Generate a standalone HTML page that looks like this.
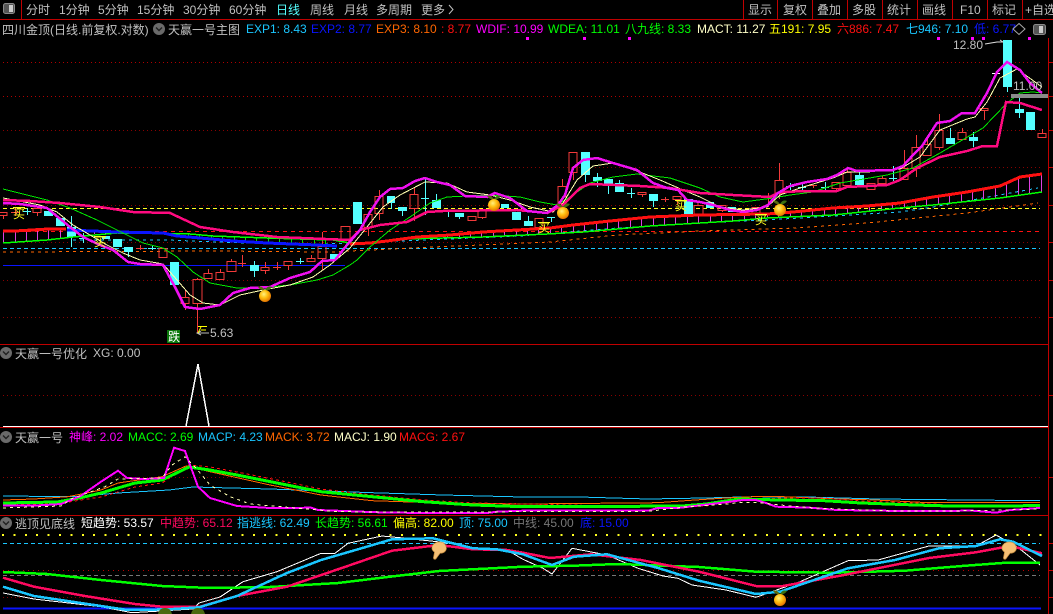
<!DOCTYPE html>
<html><head><meta charset="utf-8"><title>四川金顶</title>
<style>
html,body{margin:0;padding:0;background:#000;width:1053px;height:614px;overflow:hidden}
svg{display:block;position:absolute;left:0;top:0}
text{font-family:"Liberation Sans","WenQuanYi Zen Hei","Noto Sans CJK SC",sans-serif;font-size:12px;white-space:pre}
.l{fill:none;shape-rendering:crispEdges}
.g{fill:#c0c0c0}
</style></head><body>
<svg width="1053" height="614" viewBox="0 0 1053 614" xmlns="http://www.w3.org/2000/svg">
<defs>
<radialGradient id="ap" cx="40%" cy="35%" r="70%"><stop offset="0" stop-color="#fff080"/><stop offset=".45" stop-color="#ffc010"/><stop offset="1" stop-color="#e06a00"/></radialGradient>
<symbol id="apple" viewBox="0 0 16 20" width="16" height="20" overflow="visible">
<path d="M8 6C5 2 3 2 1 3C3 6 6 7 8 6Z" fill="#5a6a10"/><path d="M8 6C10 2 13 2 15 3C13 6 10 7 8 6Z" fill="#3c7010"/>
<circle cx="8" cy="12" r="6" fill="url(#ap)"/></symbol>
<symbol id="hand" viewBox="0 0 16 18" width="16" height="18" overflow="visible">
<path d="M3 3C6 0 12 0 14 4C16 8 13 11 9 11L6 15C5 17 3 17 3 15L4 10C1 8 1 5 3 3Z" fill="#f6c074" stroke="#c48a3c" stroke-width=".6"/></symbol>
<symbol id="dn" viewBox="0 0 12 12" width="12" height="12"><circle cx="6" cy="6" r="6" fill="#6a6a6a"/><path d="M3 4.5L6 7.5L9 4.5" fill="none" stroke="#202020" stroke-width="1.4"/></symbol>
</defs>

<!-- separators -->
<g class="l" stroke="#c00000">
<path d="M0 19.5H1053M0 344.5H1048M0 427.5H1048M0 515.5H1048"/>
<path d="M21.5 0V19M743.5 0V19M777.5 0V19M812.5 0V19M847.5 0V19M882.5 0V19M917.5 0V19M952.5 0V19M987.5 0V19M1022.5 0V19"/>
<path d="M1048.5 38V614"/>
<path d="M1048 62.5h5M1048 96.5h5M1048 130.5h5M1048 167.5h5M1048 205.5h5M1048 242.5h5M1048 280.5h5M1048 317.5h5M1048 395.5h5M1048 477.5h5M1048 543.5h5M1048 570.5h5M1048 597.5h5"/>
</g>

<!-- toolbar -->
<rect x="3.5" y="3.5" width="11" height="10" rx="2" fill="#555" stroke="#8a8a8a"/><rect x="9" y="5" width="4" height="7" fill="#ccc"/>
<g class="g">
<text x="26" y="14">分时</text><text x="59" y="14">1分钟</text><text x="98" y="14">5分钟</text><text x="137" y="14">15分钟</text><text x="183" y="14">30分钟</text><text x="229" y="14">60分钟</text>
<text x="276" y="14" style="fill:#55ffff">日线</text><text x="310" y="14">周线</text><text x="344" y="14">月线</text><text x="376" y="14">多周期</text><text x="421" y="14">更多</text>
<text x="748" y="14">显示</text><text x="783" y="14">复权</text><text x="817" y="14">叠加</text><text x="852" y="14">多股</text><text x="887" y="14">统计</text><text x="922" y="14">画线</text><text x="960" y="14">F10</text><text x="992" y="14">标记</text><text x="1025" y="14">+自选</text>
</g>
<path d="M449 5L453 9.5L449 14" fill="none" stroke="#c0c0c0"/>

<!-- info row -->
<text x="2" y="34" class="g">四川金顶(日线.前复权.对数)</text>
<use href="#dn" x="153" y="23"/>
<text x="168" y="34" class="g">天赢一号主图</text>
<text x="246" y="33" fill="#1ac6ff">EXP1: 8.43</text>
<text x="311" y="33" fill="#0a14ff">EXP2: 8.77</text>
<text x="376" y="33" fill="#ff6600">EXP3: 8.10</text>
<text x="441" y="33" fill="#ff1010">: 8.77</text>
<text x="476" y="33" fill="#ff00ff">WDIF: 10.99</text>
<text x="548" y="33" fill="#00ff00">WDEA: 11.01</text>
<text x="625" y="33" fill="#00ff00">八九线: 8.33</text>
<text x="697" y="33" fill="#ffffc8">MACT: 11.27</text>
<text x="769" y="33" fill="#ffff00">五191: 7.95</text>
<text x="837" y="33" fill="#ff1010">六886: 7.47</text>
<text x="906" y="33" fill="#1ac6ff">七946: 7.10</text>
<text x="974" y="33" fill="#0a14ff">低: 6.77</text>
<path d="M1019 23.5L1025 29L1019 34.5L1013 29Z" fill="none" stroke="#aaa"/>
<rect x="1033.5" y="24.5" width="12" height="10" rx="2" fill="#555" stroke="#8a8a8a"/><rect x="1039" y="26" width="4" height="7" fill="#ccc"/>
<path d="M526 37h3v3h-3zM583 37h3v3h-3zM628 37h3v3h-3zM937 37h3v3h-3zM971 37h3v3h-3zM982 37h3v3h-3zM1028 37h3v3h-3z" fill="#ff00ff"/>

<!-- main grid -->
<g class="l" stroke-width="1">
<path d="M3 62.5H1042M3 96.5H1042" stroke="#b00000" stroke-dasharray="1 3"/>
<path d="M3 130.5H1042M3 167.5H1042M3 205.5H1042M3 242.5H1042M3 280.5H1042M3 317.5H1042" stroke="#8a0000" stroke-dasharray="1 3"/>
<path d="M3 265.5H345" stroke="#0a14ff"/>
<path d="M3 208.5H1040" stroke="#ffff20" stroke-dasharray="4 3"/>
<path d="M3 231.5H1040" stroke="#ff1010" stroke-dasharray="4 4"/>
<path d="M3 248.5H1040" stroke="#1ac6ff" stroke-dasharray="4 3"/>
<path d="M3 252L213 251L333 252L350 251L433 247L550 242L617 235L700 231L797 228L867 223L967 213L1038 203" stroke="#ff6600" stroke-dasharray="3 4"/>
<path d="M73 240L167 240L217 242L300 245L400 241L520 236L617 228L700 223L783 219L900 212L933 207L1038 188" stroke="#1ac6ff" stroke-dasharray="3 4"/>
</g>

<!-- candles red -->
<path class="l" stroke="#f23a3a" d="
M-1 212.5h8v3h-8zM3.5 215.5V219
M11 212.5h8M15.5 208V216
M33 208.5h8v4h-8zM37.5 212.5V216
M136 248.5h8M140.5 245V250
M159 248.5h8v9h-8zM163.5 248V248
M181 297.5h8v6h-8zM185.5 290V297M185.5 303V310
M193 279.5h9v24h-9zM197.5 278V279M197.5 303V333
M204 273.5h8v5h-8zM208.5 269V273
M216 272.5h8v7h-8zM220.5 269V272
M227 261.5h9v10h-9zM231.5 259V261
M238 263.5h8M242.5 255V267
M261 267.5h8v3h-8zM265.5 262V267M265.5 270V274
M273 267.5h8M277.5 262V270
M284 261.5h8v4h-8zM288.5 265V270
M307 258.5h8v3h-8zM311.5 255V258
M318 246.5h8v12h-8zM322.5 232V246M322.5 258V270
M341 226.5h9v14h-9zM345 226V226
M364 214.5h8v13h-8zM368.5 227V236
M375 196.5h8v17h-8zM379.5 190V196M379.5 213V220
M410 194.5h8v14h-8zM414.5 187V194M414.5 208V221
M468 216.5h8v4h-8zM472.5 216V216
M478 210.5h8v7h-8zM482.5 217V219
M535 218.5h8v9h-8zM539.5 227V230
M558 186.5h8v17h-8zM562.5 179V186
M569 152.5h8v20h-8zM573.5 172V180
M638 192.5h8v2h-8zM642.5 194V197
M661 199.5h8M665.5 197V202
M673 196.5h8v3h-8zM677.5 199V204
M694 205.5h9v9h-9zM698 203V205
M718 205.5h8v5h-8zM722.5 210V212
M740 210.5h8v2h-8z
M752 207.5h8v6h-8z
M765 197.5h7M768.5 193V207
M775 180.5h8v13h-8zM779.5 163V180M779.5 193V199
M809 185.5h8M813.5 185V188
M832 182.5h8v6h-8zM836.5 188V191
M843 172.5h8v13h-8zM847.5 168V172
M867 183.5h8v6h-8zM871.5 189V190
M878 178.5h8v5h-8zM882.5 176V178
M900 168.5h8v11h-8zM904.5 150V168
M912 147.5h8v21h-8zM916.5 135V147M916.5 168V177
M923 144.5h8v11h-8zM927.5 138V144
M935 130.5h8v17h-8zM939.5 114V130M939.5 147V150
M958 132.5h8v7h-8zM962.5 128V132
M980 108.5h8v2h-8zM984.5 110V120
M1038 133.5h8v4h-8zM1042.5 129V133" fill="none"/>

<!-- candles cyan fills -->
<path class="l" stroke="#54ffff" d="M23 211.5h8M27.5 208V215M71.5 216V247M83.5 233V243M79 238.5h8M128.5 252V257M148 248.5h8M152.5 245V250M254.5 261V265M254.5 271V277M296 261.5h8M300.5 258V264M391.5 203V209M402.5 211V216M421 198.5h8M425.5 178V215M436.5 194V200M448.5 212V217M459.5 217V219M528.5 216V221M547 217.5h8M551.5 217V222M585.5 175V182M597.5 173V177M597.5 181V187M608.5 184V194M619.5 180V183M627 193.5h8M631.5 188V198M653.5 201V207M786 186.5h8M790.5 183V190M798 187.5h8M802.5 184V191M821 187.5h8M825.5 182V190M859.5 172V175M889 178.5h8M893.5 166V181M950.5 128V138M973.5 132V137M973.5 141V147M1007.5 87V92M1019.5 98V109M1019.5 113V118"/>
<path fill="#54ffff" d="M44 211h9v5h-9zM56 218h9v8h-9zM67 227h9v10h-9zM102 236h8v3h-8zM113 239h9v8h-9zM124 247h9v5h-9zM170 262h9v23h-9zM250 265h9v6h-9zM330 254h8v5h-8zM353 202h9v22h-9zM387 196h8v7h-8zM398 207h9v4h-9zM432 200h9v8h-9zM455 213h9v4h-9zM501 204h8v4h-8zM512 212h9v8h-9zM524 221h9v5h-9zM581 152h9v23h-9zM593 177h9v4h-9zM604 179h9v5h-9zM615 183h9v9h-9zM649 194h9v7h-9zM684 199h9v15h-9zM706 202h8v6h-8zM728 207h8v5h-8zM855 175h9v10h-9zM946 138h9v6h-9zM969 137h9v4h-9zM1003 40h9v47h-9zM1015 109h9v4h-9zM1026 112h9v18h-9z"/>
<path class="l" d="M992 73.5h8" stroke="#fff"/>

<!-- lower trend band -->
<path class="l" stroke="#e040e0" d="M3.5 232V243M15.5 231V242M26.5 231V241M37.5 230V241M48.5 230V240M60.5 230V239M94.5 231V234M105.5 231V234M117.5 231V233M128.5 232V234M140.5 232V234M152.5 232V234M402.5 239V239M413.5 238V239M425.5 237V239M436.5 236V238M447.5 235V238M459.5 234V238M470.5 233V237M481.5 232V237M493.5 231V236M504.5 231V236M516.5 230V235M527.5 229V235M538.5 229V234M550.5 228V234M561.5 226V233M573.5 225V232M584.5 224V232M596.5 222V231M607.5 221V229M618.5 220V229M630.5 219V228M641.5 218V227M653.5 217V226M664.5 216V225M675.5 216V224M687.5 215V224M698.5 215V223M710.5 215V222M721.5 215V222M732.5 215V221M744.5 214V220M755.5 214V219M767.5 214V218M778.5 213V218M790.5 212V217M801.5 211V217M812.5 210V216M824.5 209V215M835.5 208V215M847.5 207V214M858.5 206V213M869.5 206V212M881.5 205V211M892.5 204V209M904.5 203V208M915.5 200V207M926.5 198V206M938.5 196V204M949.5 195V203M961.5 193V202M972.5 191V201M983.5 189V200M995.5 187V199M1006.5 184V197M1018.5 178V195M1029.5 175V194M1041.5 174V192"/>
<path class="l" stroke="#00e000" d="M188.5 234V237M199.5 235V239M211.5 236V240M222.5 236V241M234.5 236V241M245.5 237V242M256.5 237V243M268.5 238V243M279.5 238V244M291.5 239V244M302.5 239V245M314.5 239V245M325.5 240V246"/>
<path class="l" stroke="#00ff00" d="M3 243L47 240L73 237L117 233L190 234L213 236L267 238L333 240L350 243L383 242L403 239L483 237L547 234L583 232L617 229L650 226L700 223L733 221L767 218L833 215L900 208L933 205L1000 198L1042 192" stroke-width="1.5"/>
<path class="l" stroke="#0a14ff" stroke-width="3" d="M67 230L117 232L163 233L177 236L200 238L233 241L267 243L317 245L337 246"/>
<path class="l" stroke="#ff1010" stroke-width="3" d="M3 231L15 231L48 229L66 229M350 244L370 243L387 241L417 237L450 235L483 232L517 230L550 228L573 225L610 221L650 217L700 215L767 214L793 212L833 208L867 206L900 203L933 197L967 192L1000 186L1020 177L1042 174"/>

<!-- MAs -->
<path class="l" stroke="#00e800" stroke-width="1" d="M3 189L47 200L70 208L97 220L117 230L143 243L163 248L177 257L193 272L210 283L237 288L260 288L290 285L317 280L333 275L350 265L357 260L370 247L390 230L410 217L430 203L447 197L467 196L490 195L520 197L540 202L557 205L573 195L590 183L613 177L637 174L670 178L700 188L720 197L743 202L773 198L790 195L813 192L840 183L887 175L913 168L940 153L983 128L1007 103L1020 93L1033 92L1042 93"/>
<path class="l" stroke="#ffffb0" stroke-width="1" d="M3 198L40 205L57 212L73 225L90 235L107 245L123 253L140 260L163 264L177 280L190 295L203 303L220 305L240 295L263 290L290 285L313 277L330 265L350 248L367 227L383 207L400 195L425 182L447 183L467 192L490 195L510 200L530 207L553 212L563 203L577 180L593 166L613 163L640 172L660 180L683 190L700 197L720 207L743 210L767 207L780 195L800 188L833 178L847 172L867 172L900 169L920 157L940 130L967 119L975 117L987 102L1000 78L1017 69L1042 87"/>
<path class="l" stroke="#ff0a80" stroke-width="2.5" d="M3 200L30 201L60 203L100 207L133 212L170 213L200 227L233 232L277 237L350 240L360 230L380 225L407 222L427 212L443 211L517 210L547 213L563 205L580 188L590 184L640 186L670 188L700 193L733 195L770 197L780 192L810 191L837 191L847 187L887 185L900 180L917 168L940 157L967 151L983 146L997 146L1006 102L1020 103L1042 110"/>
<path class="l" stroke="#f010f0" stroke-width="2.5" d="M3 203L20 204L47 208L70 227L83 237L100 245L113 250L128 262L140 264L163 265L175 287L185 307L200 309L220 305L233 293L250 288L270 287L290 278L310 272L322 261L335 260L347 245L360 230L370 212L380 197L390 189L403 188L415 181L425 178L437 182L450 185L465 196L487 197L495 193L510 198L527 211L547 213L558 205L565 195L573 168L583 160L597 158L613 163L637 170L653 183L667 188L678 190L687 200L700 202L713 205L730 210L743 212L757 210L768 205L778 193L790 186L807 182L827 179L837 175L848 168L857 171L893 170L903 166L913 155L922 146L937 123L950 121L962 113L975 113L987 93L997 72L1007 62L1020 70L1030 83L1042 93"/>
<rect x="1011" y="94" width="37" height="4" fill="#8a8a8a"/>

<!-- labels -->
<text x="953" y="49" class="g">12.80</text>
<path d="M985 44L997 42H1003M1000 40l3 2" stroke="#ddd" fill="none"/>
<text x="1013" y="90" class="g">11.00</text>
<text x="210" y="337" class="g">5.63</text>
<path d="M197 333H209M201 331l-4 2l4 2" stroke="#bbb" fill="none"/>
<path d="M198 326.5H207M201 327L198 333M201 330H206" stroke="#ffff00" fill="none"/>
<rect x="167" y="330" width="13" height="13" fill="#0a780a"/>
<text x="168" y="341" style="fill:#fff">跌</text>

<g fill="#ffff20">
<text x="13" y="218">买</text><text x="94" y="246">买</text><text x="538" y="232">买</text><text x="675" y="210">买</text><text x="755" y="224">买</text>
</g>
<path class="l" stroke="#ffff20" d="M13 207.5h12M94 236.5h12M538 222.5h12M675 200.5h12M755 214.5h12"/>

<use href="#apple" x="257" y="284" width="16" height="20"/>
<use href="#apple" x="486" y="193" width="16" height="20"/>
<use href="#apple" x="555" y="201" width="16" height="20"/>
<use href="#apple" x="772" y="198" width="16" height="20"/>

<!-- pane 2 -->
<use href="#dn" x="0" y="347"/>
<text x="15" y="358" class="g">天赢一号优化</text>
<text x="93" y="357" class="g">XG: 0.00</text>
<path class="l" d="M3 395.5H1042" stroke="#8a0000" stroke-dasharray="1 3"/>
<path class="l" stroke="#fff" stroke-width="1.5" d="M186 426L198 364L209 426"/>
<path class="l" stroke="#fff" stroke-width="1" d="M3 426.5H1048"/>

<!-- pane 3 -->
<use href="#dn" x="0" y="431"/>
<text x="15" y="442" class="g">天赢一号</text>
<text x="69" y="441" fill="#ff00ff">神峰: 2.02</text>
<text x="128" y="441" fill="#00ff00">MACC: 2.69</text>
<text x="198" y="441" fill="#1ac6ff">MACP: 4.23</text>
<text x="265" y="441" fill="#ff6600">MACK: 3.72</text>
<text x="334" y="441" fill="#ffffc8">MACJ: 1.90</text>
<text x="399" y="441" fill="#ff1010">MACG: 2.67</text>
<path class="l" d="M3 477.5H1042" stroke="#8a0000" stroke-dasharray="1 3"/>
<path class="l" stroke="#1ac6ff" d="M3 496L74 496.7L118 493L169 490L193 487L270 489L372 492.7L443 495L523 497L580 497L648 499L705 498L753 496.7L807 497L878 499L969 500L1040 500.7"/>
<path class="l" stroke="#ff6600" d="M3 500L34 499L68 496.7L101 490L118 483L162 476.7L186 466L210 471.7L270 485L321 495L372 500.7L440 503L523 504L658 502.7L695 500L726 498L753 496.7L783 496.7L831 498.7L875 500L929 502.7L1040 502.7"/>
<path class="l" stroke="#ff1010" stroke-dasharray="3 3" d="M3 505L57 504L81 500L101 497L135 487L162 483L189 465L210 467L237 472L287 482L321 489L372 495L423 500L473 503L530 504L567 505L682 507L706 506L739 501L780 498L824 498L861 501L915 503L949 505L1040 506"/>
<path class="l" stroke="#00ff00" stroke-width="3" d="M3 503L57 502L81 497.7L101 493L135 483L162 480L189 467L210 470L237 475L287 485L321 491.7L372 496.7L423 501.7L473 505L523 506.7L567 506.7L682 506L706 504L739 499L780 500L824 500.7L861 503L915 505L949 506L1040 505.7"/>
<path class="l" stroke="#ff00ff" stroke-width="2" d="M3 505.7L34 505.7L61 504L71 500L81 495.7L101 481.7L118 470.7L127 478L144 479L164 478L174 447.7L185 451L193 473L198 486.7L210 498L237 506L270 508L311 507.7L318 510L389 512.7L487 513L497 511.7L523 510.7L648 510.7L658 508L678 508L722 502.7L743 500L756 500L766 503L776 506.7L810 507.7L837 510L902 511L973 510.7L996 512.7L1010 510L1040 508"/>
<path class="l" stroke="#ffffb0" stroke-dasharray="3 4" d="M3 508L61 506L71 499L105 486.7L118 479L162 478L172 465L185 456.7L196 468L210 485L230 496.7L250 504L338 511.7L440 512L523 511.7L645 511.7L668 509L685 507L726 504L739 502.7L760 502.7L780 505L810 507.7L837 509L895 511L973 510.7L1040 509"/>

<!-- pane 4 -->
<use href="#dn" x="0" y="517"/>
<text x="15" y="528" class="g">逃顶见底线</text>
<text x="81" y="527" fill="#ffffff">短趋势: 53.57</text>
<text x="160" y="527" fill="#ff0a60">中趋势: 65.12</text>
<text x="237" y="527" fill="#1ac6ff">指逃线: 62.49</text>
<text x="315" y="527" fill="#00ff00">长趋势: 56.61</text>
<text x="393" y="527" fill="#ffff00">偏高: 82.00</text>
<text x="459" y="527" fill="#1ac6ff">顶: 75.00</text>
<text x="513" y="527" fill="#777777">中线: 45.00</text>
<text x="580" y="527" fill="#0a14ff">底: 15.00</text>
<g class="l">
<path d="M2 535H1044" stroke="#ffff20" stroke-width="2" stroke-dasharray="2 9.4"/>
<path d="M3 543.5H1040" stroke="#1ac6ff" stroke-dasharray="4 3"/>
<path d="M3 570.5H1042" stroke="#c00000" stroke-dasharray="1 4"/>
<path d="M3 575.5H1040" stroke="#777" stroke-dasharray="4 3"/>
<path d="M3 597.5H1042" stroke="#8a0000" stroke-dasharray="1 3"/>
<path d="M3 608.5H1041" stroke="#0a14ff" stroke-width="2"/>
<path stroke="#fff" d="M3 593L34 599L101 606.7L132 612.7L166 610.7L193 609L199 603L220 597L243 581.7L277 571.7L321 553.3L335 553.3L348 543.3L382 536L406 538.3L446 542.7L480 549.3L507 550L523 559.3L543 568.3L552 574L572 548.3L607 555L638 568.3L663 576L678 578.3L692 585L726 590L756 597.3L800 581.7L848 560.7L878 560L929 546L976 546L996 535L1017 546.7L1040 565"/>
<path stroke="#00ff00" stroke-width="2.5" d="M3 572L47 574L101 580L162 586L210 588L270 587L338 583L396 576L439 571L523 566.7L574 565.7L618 564L699 567L756 571.7L834 572.7L905 570.7L962 566L1006 562.7L1040 562.7"/>
<path stroke="#ff0a60" stroke-width="2.5" d="M3 577.7L34 586.7L85 596L135 604L162 606.7L199 607L237 596L287 586.7L338 569.3L392 550.7L439 545L473 549.3L507 550L523 552.7L550 558L591 554.3L641 560L699 571.7L756 586L783 586L844 575L929 558L976 552.3L1010 546L1042 553.3"/>
<path stroke="#1ac6ff" stroke-width="2.5" d="M3 586.7L34 596L101 606L128 610L169 609.3L199 607.3L237 596L287 573L321 560L358 549.3L392 539.3L433 538.3L473 548.3L497 549.3L523 554.3L552 565L574 556.7L607 554.3L658 568L699 580.7L756 594L780 591.7L814 580L848 568.3L895 560L939 548.3L976 546L1000 539.3L1013 541.7L1042 556"/>
</g>
<use href="#hand" x="430" y="541" width="18" height="20"/>
<use href="#hand" x="1000" y="541" width="18" height="20"/>
<use href="#apple" x="772" y="588" width="16" height="20"/>
<path d="M165 608C161 608 159 610 158 614H172C171 610 169 608 165 608ZM198 608C194 608 192 610 191 614H205C204 610 202 608 198 608Z" fill="#4a6a10"/>
</svg>
</body></html>
